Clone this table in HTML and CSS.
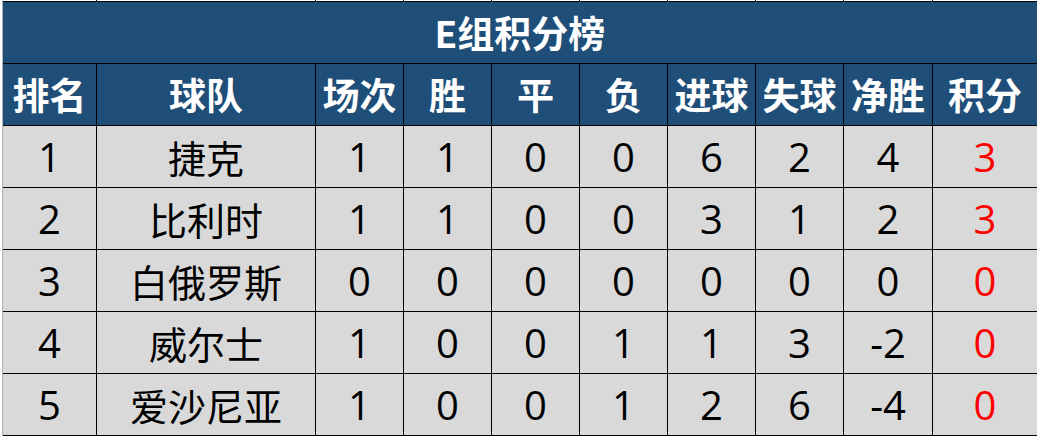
FILE: index.html
```html
<!DOCTYPE html>
<html lang="zh-CN">
<head>
<meta charset="utf-8">
<link rel="stylesheet" href="styles.css">
</head>
<body>
<div class="sheet">
  <div class="cut"></div><div class="cut"></div><div class="cut"></div><div class="cut"></div><div class="cut"></div><div class="cut"></div><div class="cut"></div><div class="cut"></div><div class="cut"></div><div class="cut"></div>
  <div class="title">E组积分榜</div>
  <div class="hd">排名</div><div class="hd">球队</div><div class="hd">场次</div><div class="hd">胜</div><div class="hd">平</div><div class="hd">负</div><div class="hd">进球</div><div class="hd">失球</div><div class="hd">净胜</div><div class="hd">积分</div>

  <div class="c">1</div><div class="c team">捷克</div><div class="c">1</div><div class="c">1</div><div class="c">0</div><div class="c">0</div><div class="c">6</div><div class="c">2</div><div class="c">4</div><div class="c pts">3</div>
  <div class="c">2</div><div class="c team">比利时</div><div class="c">1</div><div class="c">1</div><div class="c">0</div><div class="c">0</div><div class="c">3</div><div class="c">1</div><div class="c">2</div><div class="c pts">3</div>
  <div class="c">3</div><div class="c team">白俄罗斯</div><div class="c">0</div><div class="c">0</div><div class="c">0</div><div class="c">0</div><div class="c">0</div><div class="c">0</div><div class="c">0</div><div class="c pts">0</div>
  <div class="c">4</div><div class="c team">威尔士</div><div class="c">1</div><div class="c">0</div><div class="c">0</div><div class="c">1</div><div class="c">1</div><div class="c">3</div><div class="c">-2</div><div class="c pts">0</div>
  <div class="c">5</div><div class="c team">爱沙尼亚</div><div class="c">1</div><div class="c">0</div><div class="c">0</div><div class="c">1</div><div class="c">2</div><div class="c">6</div><div class="c">-4</div><div class="c pts">0</div>
</div>
</body>
</html>
```

FILE: styles.css
```css
html, body {
  margin: 0;
  padding: 0;
  background: #ffffff;
}
body {
  padding-left: 2px;
  width: 1035px;
  height: 436px;
  overflow: hidden;
}
.sheet {
  display: grid;
  grid-template-columns: 93px 218px repeat(6, 87px) 88px 104px;
  grid-template-rows: 1px repeat(7, 61px);
  gap: 1px;
  padding-bottom: 1px;
  background: #000000;
  border-left: 1px solid #b4b4b4;
  width: max-content;
  font-family: "Noto Sans CJK SC", "Noto Sans", sans-serif;
}
.cut {
  background: #ffffff;
}
.title {
  grid-column: 1 / -1;
  background: #1f4e79;
  color: #ffffff;
  font-weight: 700;
  font-size: 37px;
  display: flex;
  align-items: center;
  justify-content: center;
  line-height: 1;
}
.hd {
  background: #1f4e79;
  color: #ffffff;
  font-weight: 700;
  font-size: 37px;
  display: flex;
  align-items: center;
  justify-content: center;
  line-height: 1;
  white-space: nowrap;
}
.c {
  background: #d9d9d9;
  color: #000000;
  font-family: "Open Sans", "Noto Sans CJK SC", sans-serif;
  font-size: 40px;
  display: flex;
  align-items: center;
  justify-content: center;
  line-height: 1;
  white-space: nowrap;
}
.team {
  font-family: "Noto Sans CJK SC", sans-serif;
  font-size: 38px;
}
.pts {
  color: #ff0000;
}
```
